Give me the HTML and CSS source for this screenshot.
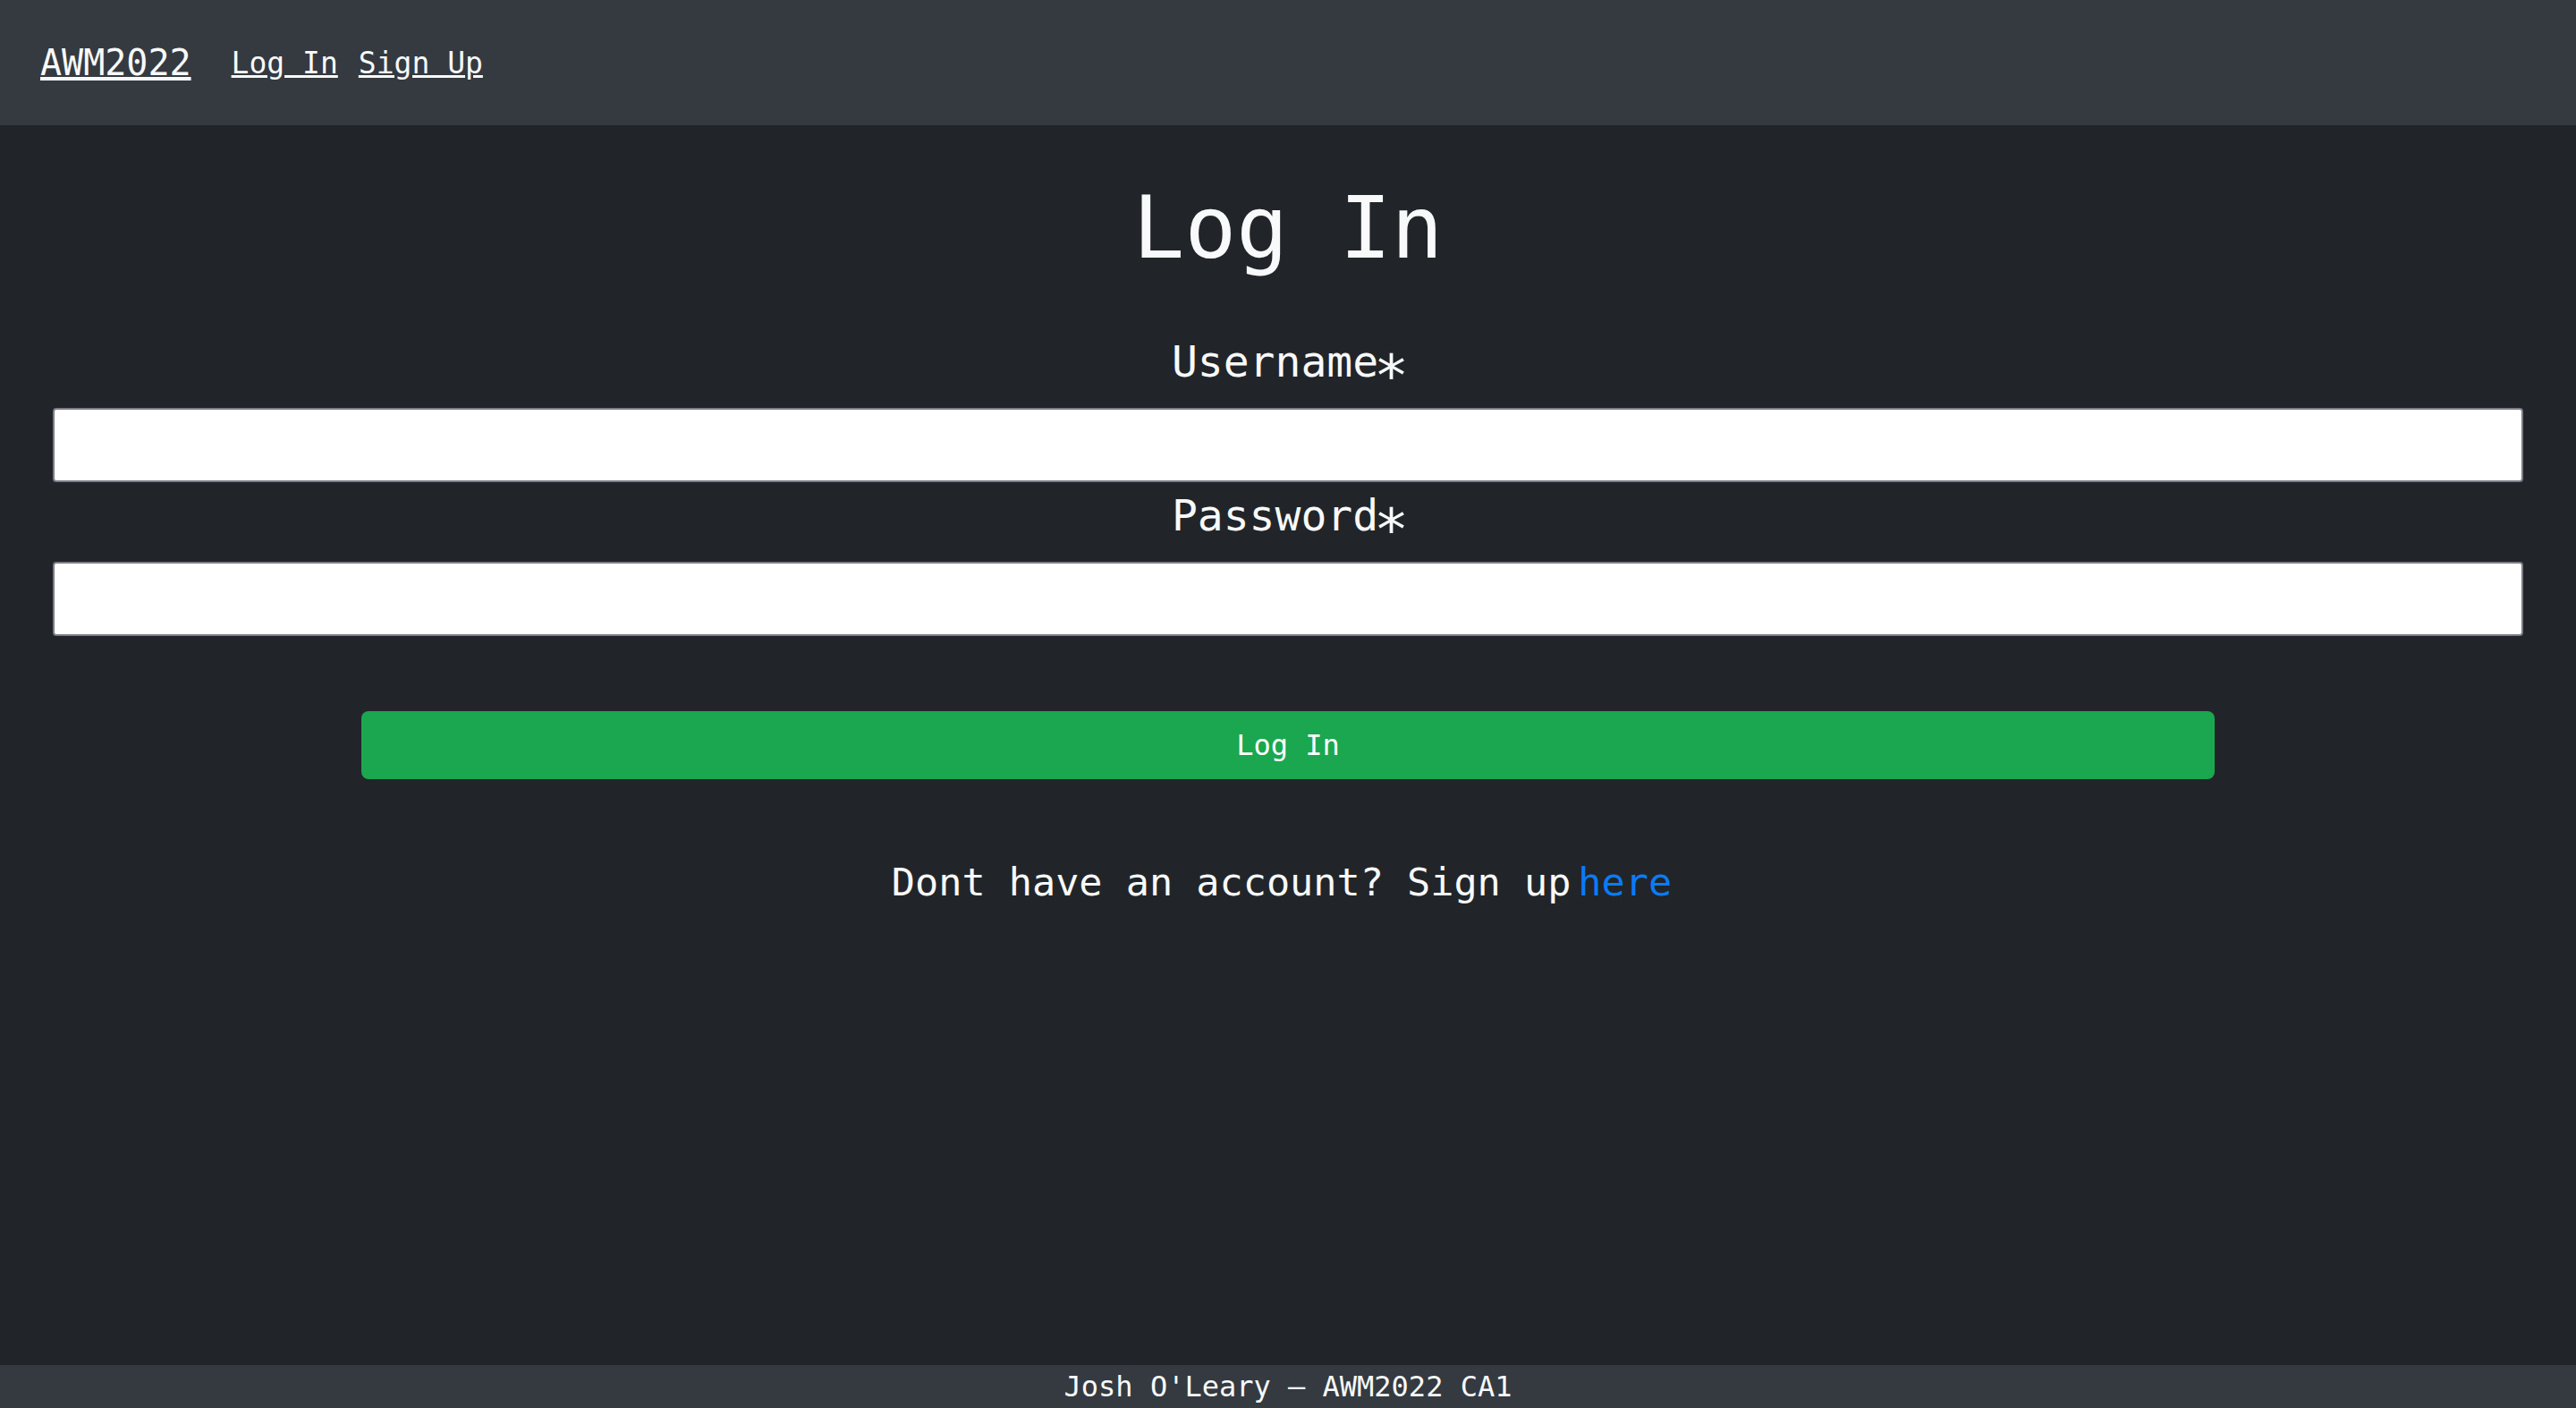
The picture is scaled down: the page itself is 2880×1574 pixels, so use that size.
FILE: index.html
```html
<!DOCTYPE html>
<html lang="en">
<head>
<meta charset="utf-8">
<title>Log In</title>
<link rel="stylesheet" href="styles.css">
</head>
<body>
<nav class="navbar">
  <a class="brand" href="#">AWM2022</a>
  <div class="nav-links">
    <a class="nav-link" href="#">Log In</a>
    <a class="nav-link" href="#">Sign Up</a>
  </div>
</nav>
<main class="content">
  <h1 class="title">Log In</h1>
  <form class="login-form">
    <label class="field-label" for="username">Username<span class="req">*</span></label>
    <input class="field-input" id="username" type="text">
    <label class="field-label second" for="password">Password<span class="req">*</span></label>
    <input class="field-input" id="password" type="password">
    <button class="submit-btn" type="button">Log In</button>
  </form>
  <p class="signup-text">Dont have an account? Sign up<a class="signup-link" href="#">here</a></p>
</main>
<footer class="footer">Josh O'Leary – AWM2022 CA1</footer>
</body>
</html>
```
FILE: styles.css
```css
html, body {
  margin: 0;
  padding: 0;
}
body {
  background: #212529;
  color: #f8f9fa;
  font-family: "DejaVu Sans Mono", "Liberation Mono", monospace;
  min-height: 100vh;
  display: flex;
  flex-direction: column;
}
.navbar {
  height: 140px;
  background: #343a40;
  display: flex;
  align-items: center;
  padding-left: 45px;
  box-sizing: border-box;
}
.brand {
  color: #f8f9fa;
  font-size: 40px;
  text-decoration: underline;
  margin-right: 45px;
}
.nav-links {
  display: flex;
  gap: 23px;
}
.nav-link {
  color: #f8f9fa;
  font-size: 33px;
  text-decoration: underline;
}
.content {
  flex: 1;
  padding: 0 59px;
  text-align: center;
}
.title {
  margin: 56px 0 0;
  font-size: 96px;
  line-height: 118px;
  font-weight: normal;
}
.login-form {
  display: flex;
  flex-direction: column;
  align-items: center;
}
.field-label {
  display: block;
  font-size: 48px;
  line-height: 72px;
  margin-top: 54px;
}
.field-label.second {
  margin-top: 1px;
}
.req {
  font-size: 1.35em;
  line-height: 0;
  vertical-align: -21px;
  margin-left: -5px;
  letter-spacing: -5px;
}
.field-input {
  display: block;
  width: 100%;
  height: 83px;
  box-sizing: border-box;
  margin: 16px 0 0;
  background: #ffffff;
  border: 2px solid #7c7b87;
  border-radius: 4px;
}
.submit-btn {
  width: 75%;
  height: 76px;
  margin-top: 84px;
  background: #1aa74f;
  color: #ffffff;
  border: none;
  border-radius: 8px;
  font-family: "DejaVu Sans Mono", "Liberation Mono", monospace;
  font-size: 32px;
}
.signup-text {
  margin: 82px 0 0;
  font-size: 43.5px;
  line-height: 66px;
}
.signup-link {
  color: #0a7cf5;
  text-decoration: none;
  margin-left: 8px;
  margin-right: 14px;
}
.footer {
  height: 48px;
  background: #343a40;
  display: flex;
  align-items: center;
  justify-content: center;
  font-size: 32px;
  color: #f8f9fa;
}
```
